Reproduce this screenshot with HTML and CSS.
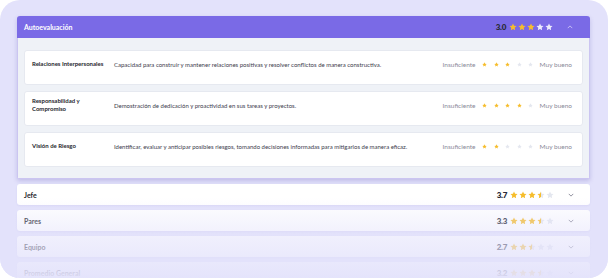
FILE: index.html
```html
<!DOCTYPE html>
<html lang="es">
<head>
    <meta charset="UTF-8">
    <meta name="viewport" content="width=device-width, initial-scale=1.0">
    <title>Evaluación de competencias</title>
    <link rel="stylesheet" href="styles.css">
</head>
<body>
    <svg width="0" height="0" class="defs">
        <defs>
            <symbol id="star" viewBox="0 0 24 24">
                <path d="M12 1.5l3.2 6.6 7.3 1-5.3 5.1 1.3 7.2L12 18l-6.5 3.4 1.3-7.2L1.5 9.1l7.3-1z"/>
            </symbol>
            <linearGradient id="half" x1="0" x2="1" y1="0" y2="0">
                <stop offset="50%" stop-color="#f6bd2c"/>
                <stop offset="50%" stop-color="#e4e7ef"/>
            </linearGradient>
        </defs>
    </svg>

    <div class="frame">

        <!-- Autoevaluación (abierto) -->
        <section class="panel open">
            <header class="panel-head">
                <span class="panel-title">Autoevaluación</span>
                <div class="score">
                    <b>3.0</b>
                    <span class="stars">
                        <svg class="on"><use href="#star"/></svg>
                        <svg class="on"><use href="#star"/></svg>
                        <svg class="on"><use href="#star"/></svg>
                        <svg class="off"><use href="#star"/></svg>
                        <svg class="off"><use href="#star"/></svg>
                    </span>
                </div>
                <svg class="chevron" viewBox="0 0 8 5"><polyline points="1,4 4,1 7,4"/></svg>
            </header>

            <div class="panel-body">
                <div class="item">
                    <span class="item-name">Relaciones Interpersonales</span>
                    <span class="item-desc">Capacidad para construir y mantener relaciones positivas y resolver conflictos de manera constructiva.</span>
                    <div class="scale">
                        <span>Insuficiente</span>
                        <svg class="on"><use href="#star"/></svg>
                        <svg class="on"><use href="#star"/></svg>
                        <svg class="on"><use href="#star"/></svg>
                        <svg class="off"><use href="#star"/></svg>
                        <svg class="off"><use href="#star"/></svg>
                        <span>Muy bueno</span>
                    </div>
                </div>
                <div class="item">
                    <span class="item-name">Responsabilidad y Compromiso</span>
                    <span class="item-desc">Demostración de dedicación y proactividad en sus tareas y proyectos.</span>
                    <div class="scale">
                        <span>Insuficiente</span>
                        <svg class="on"><use href="#star"/></svg>
                        <svg class="on"><use href="#star"/></svg>
                        <svg class="on"><use href="#star"/></svg>
                        <svg class="on"><use href="#star"/></svg>
                        <svg class="off"><use href="#star"/></svg>
                        <span>Muy bueno</span>
                    </div>
                </div>
                <div class="item">
                    <span class="item-name">Visión de Riesgo</span>
                    <span class="item-desc">Identificar, evaluar y anticipar posibles riesgos, tomando decisiones informadas para mitigarlos de manera eficaz.</span>
                    <div class="scale">
                        <span>Insuficiente</span>
                        <svg class="on"><use href="#star"/></svg>
                        <svg class="on"><use href="#star"/></svg>
                        <svg class="off"><use href="#star"/></svg>
                        <svg class="off"><use href="#star"/></svg>
                        <svg class="off"><use href="#star"/></svg>
                        <span>Muy bueno</span>
                    </div>
                </div>
            </div>
        </section>

        <!-- Jefe -->
        <section class="panel">
            <header class="panel-head">
                <span class="panel-title">Jefe</span>
                <div class="score">
                    <b>3.7</b>
                    <span class="stars">
                        <svg class="on"><use href="#star"/></svg>
                        <svg class="on"><use href="#star"/></svg>
                        <svg class="on"><use href="#star"/></svg>
                        <svg class="half"><use href="#star"/></svg>
                        <svg class="off"><use href="#star"/></svg>
                    </span>
                </div>
                <svg class="chevron" viewBox="0 0 8 5"><polyline points="1,1 4,4 7,1"/></svg>
            </header>
        </section>

        <!-- Pares -->
        <section class="panel">
            <header class="panel-head">
                <span class="panel-title">Pares</span>
                <div class="score">
                    <b>3.3</b>
                    <span class="stars">
                        <svg class="on"><use href="#star"/></svg>
                        <svg class="on"><use href="#star"/></svg>
                        <svg class="on"><use href="#star"/></svg>
                        <svg class="half"><use href="#star"/></svg>
                        <svg class="off"><use href="#star"/></svg>
                    </span>
                </div>
                <svg class="chevron" viewBox="0 0 8 5"><polyline points="1,1 4,4 7,1"/></svg>
            </header>
        </section>

        <!-- Equipo -->
        <section class="panel">
            <header class="panel-head">
                <span class="panel-title">Equipo</span>
                <div class="score">
                    <b>2.7</b>
                    <span class="stars">
                        <svg class="on"><use href="#star"/></svg>
                        <svg class="on"><use href="#star"/></svg>
                        <svg class="half"><use href="#star"/></svg>
                        <svg class="off"><use href="#star"/></svg>
                        <svg class="off"><use href="#star"/></svg>
                    </span>
                </div>
                <svg class="chevron" viewBox="0 0 8 5"><polyline points="1,1 4,4 7,1"/></svg>
            </header>
        </section>

        <!-- Promedio General -->
        <section class="panel">
            <header class="panel-head">
                <span class="panel-title">Promedio General</span>
                <div class="score">
                    <b>3.2</b>
                    <span class="stars">
                        <svg class="on"><use href="#star"/></svg>
                        <svg class="on"><use href="#star"/></svg>
                        <svg class="on"><use href="#star"/></svg>
                        <svg class="half"><use href="#star"/></svg>
                        <svg class="off"><use href="#star"/></svg>
                    </span>
                </div>
                <svg class="chevron" viewBox="0 0 8 5"><polyline points="1,1 4,4 7,1"/></svg>
            </header>
        </section>

        <div class="fade"></div>
    </div>
</body>
</html>
```

FILE: styles.css
```css
body {
    font-family: "Lato", "Noto Sans", sans-serif;
    margin: 0;
    padding: 0;
    background-color: #fff;
    color: #1f1f2e;
}

.defs {
    position: absolute;
}

.frame {
    position: relative;
    width: 608px;
    height: 278px;
    box-sizing: border-box;
    padding: 16px 18px 0 17px;
    background-color: #e3e2fb;
    border-radius: 20px;
    overflow: hidden;
    display: flex;
    flex-direction: column;
    gap: 5px;
}

.panel {
    background-color: #fff;
    border-radius: 3px;
    flex-shrink: 0;
    box-shadow: 0 1px 2px rgba(90, 80, 180, 0.08);
}

.panel.open {
    border: 1px solid #cbc5f1;
    border-top: none;
    border-radius: 3px 3px 2px 2px;
    box-shadow: 0 2px 4px rgba(90, 80, 180, 0.25);
}

.panel-head {
    display: flex;
    align-items: center;
    height: 21px;
    padding: 0 16px 0 7px;
    font-size: 7px;
}

.panel.open .panel-head {
    height: 22px;
    background-color: #7a6ae6;
    border-radius: 3px 3px 0 0;
    margin: 0 -1px;
    padding: 0 17px 0 7px;
}

.panel-title {
    flex: 1;
    font-weight: 700;
}

.panel.open .panel-title {
    color: #fff;
}

.score {
    display: flex;
    align-items: center;
    gap: 3px;
}

.score b {
    font-size: 8px;
    font-weight: 800;
    color: #2a2a3a;
    letter-spacing: -0.3px;
}

.stars {
    display: flex;
    gap: 1px;
}

.stars svg {
    width: 8px;
    height: 8px;
}

svg.on {
    fill: #f6bd2c;
}

svg.off {
    fill: #e4e7ef;
}

svg.half {
    fill: url(#half);
}

.panel.open .stars svg.off {
    fill: #eceafc;
}

.chevron {
    width: 6px;
    height: 4px;
    margin-left: 14px;
    fill: none;
    stroke: #6d6d80;
    stroke-width: 1;
}

.panel.open .chevron {
    stroke: #d9d4fb;
}

.panel-body {
    background-color: #eff2f7;
    padding: 12px 6px 11px 6px;
    display: flex;
    flex-direction: column;
    gap: 6px;
}

.item {
    display: grid;
    grid-template-columns: 74px 1fr auto;
    column-gap: 8px;
    align-items: center;
    height: 35px;
    box-sizing: border-box;
    padding: 0 10px 7px 7px;
    background-color: #fff;
    border: 1px solid #e6e9f0;
    border-radius: 3px;
    font-size: 6px;
}

.item-name {
    font-weight: 700;
    line-height: 8px;
}

.item-desc {
    color: #3c3c4c;
}

.scale {
    display: flex;
    align-items: center;
    gap: 6.5px;
    font-size: 6.5px;
    color: #8a8a99;
}

.scale svg {
    width: 5px;
    height: 5px;
}

.fade {
    position: absolute;
    left: 0;
    right: 0;
    bottom: 0;
    height: 80px;
    background: linear-gradient(to bottom, rgba(227, 226, 251, 0), rgba(227, 226, 251, 0.55) 50%, rgba(227, 226, 251, 0.95));
    pointer-events: none;
}
```
